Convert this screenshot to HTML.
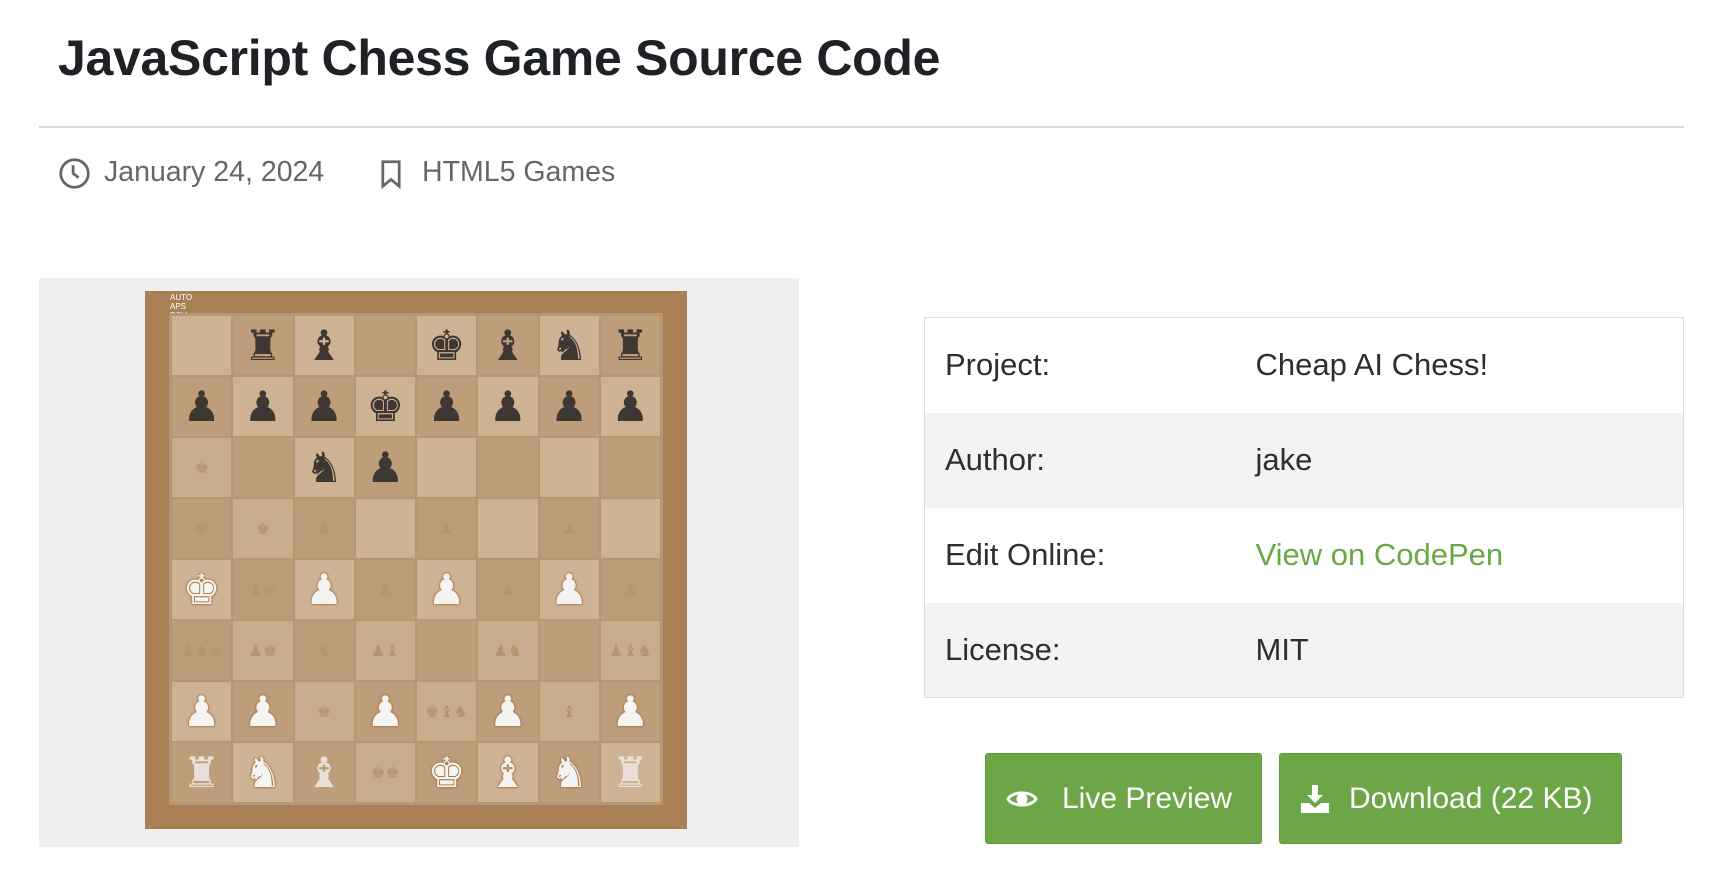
<!DOCTYPE html>
<html><head><meta charset="utf-8"><style>
*{margin:0;padding:0;box-sizing:border-box}
body{width:1722px;height:884px;background:#fff;font-family:"Liberation Sans",sans-serif;position:relative;overflow:hidden;color:#212529}
h1{position:absolute;left:58px;top:29px;font-size:50px;font-weight:bold;letter-spacing:-0.3px;color:#1e2125}
.hr{position:absolute;left:39px;top:126px;width:1645px;height:2px;background:#dcdcdc}
.meta{position:absolute;top:155px;font-size:28.5px;color:#63676c;line-height:34px}
.gray{position:absolute;left:39px;top:278px;width:760px;height:569px;background:#efefef}
.board{position:absolute;left:145px;top:291px;width:542px;height:538px;background:#a98054}
.inner{position:absolute;left:24px;top:22px;width:494px;height:492px;background:#b89672;padding:3px;display:grid;grid-template-columns:repeat(8,1fr);grid-template-rows:repeat(8,1fr);gap:2px}
.c{display:flex;align-items:center;justify-content:center;font-family:"DejaVu Sans",sans-serif;font-size:42px;line-height:1}
.l{background:#cdb294}.d{background:#bd9d7a}
.b{color:#3f3832}
.w{color:#f6f4f2;text-shadow:0 0 2px #a87a4c,0 0 2px #a87a4c,0 0 2px #a87a4c}
.f{color:#b8946d;font-size:16px;opacity:.8}
.fw{color:#e8e0d8}
.small{position:absolute;left:25px;top:2px;font-size:8px;color:#fff;line-height:9px}
table{position:absolute;left:924px;top:317px;width:760px;border-collapse:collapse;border:1.5px solid #dedede;font-size:31px;color:#2b2f33}
td{height:95px;padding-left:20px}
tr:nth-child(even) td{background:#f3f3f3}
td.v{padding-left:0}
.btn{position:absolute;top:753px;height:91px;background:#6ca646;border:1px solid #5f9a3c;border-radius:3px;color:#fff;font-size:30px;display:flex;align-items:center}
</style></head><body>
<h1>JavaScript Chess Game Source Code</h1>
<div class="hr"></div>
<svg style="position:absolute;left:58px;top:157px" width="33" height="33" viewBox="0 0 24 24" fill="none" stroke="#63676c" stroke-width="2"><circle cx="12" cy="12" r="10"/><path d="M11 6v6l4 3"/></svg>
<div class="meta" style="left:104px">January 24, 2024</div>
<svg style="position:absolute;left:380px;top:159px" width="22" height="30" viewBox="0 0 16 22" fill="none" stroke="#63676c" stroke-width="2"><path d="M2 2h12v18l-6-5-6 5z"/></svg>
<div class="meta" style="left:422px">HTML5 Games</div>
<div class="gray"></div>
<div class="board">
<div class="small">AUTO<br>APS<br>POV</div>
<div class="inner">
<div class="c l"></div><div class="c d b">♜</div><div class="c l b">♝</div><div class="c d"></div><div class="c l b">♚</div><div class="c d b">♝</div><div class="c l b">♞</div><div class="c d b">♜</div>
<div class="c d b">♟</div><div class="c l b">♟</div><div class="c d b">♟</div><div class="c l b">♚</div><div class="c d b">♟</div><div class="c l b">♟</div><div class="c d b">♟</div><div class="c l b">♟</div>
<div class="c l f">♚</div><div class="c d"></div><div class="c l b">♞</div><div class="c d b">♟</div><div class="c l"></div><div class="c d"></div><div class="c l"></div><div class="c d"></div>
<div class="c d f">♚</div><div class="c l f">♚</div><div class="c d f">♟</div><div class="c l"></div><div class="c d f">♟</div><div class="c l"></div><div class="c d f">♟</div><div class="c l"></div>
<div class="c l w">♚</div><div class="c d f">♟♚</div><div class="c l w">♟</div><div class="c d f">♟</div><div class="c l w">♟</div><div class="c d f">♟</div><div class="c l w">♟</div><div class="c d f">♟</div>
<div class="c d f">♟♞♚</div><div class="c l f">♟♚</div><div class="c d f">♞</div><div class="c l f">♟♝</div><div class="c d"></div><div class="c l f">♟♞</div><div class="c d"></div><div class="c l f">♟♝♞</div>
<div class="c l w">♟</div><div class="c d w">♟</div><div class="c l f">♚</div><div class="c d w">♟</div><div class="c l f">♚♝♞</div><div class="c d w">♟</div><div class="c l f">♝</div><div class="c d w">♟</div>
<div class="c d fw">♜</div><div class="c l w">♞</div><div class="c d fw">♝</div><div class="c l f">♚♚</div><div class="c d w">♚</div><div class="c l w">♝</div><div class="c d w">♞</div><div class="c l fw">♜</div>
</div></div>
<table>
<tr><td style="width:331px">Project:</td><td class="v">Cheap AI Chess!</td></tr>
<tr><td>Author:</td><td class="v">jake</td></tr>
<tr><td>Edit Online:</td><td class="v" style="color:#6aa843">View on CodePen</td></tr>
<tr><td>License:</td><td class="v">MIT</td></tr>
</table>
<div class="btn" style="left:985px;width:277px"><svg style="margin-left:20px;margin-right:24px" width="32" height="24" viewBox="0 0 32 24"><path d="M2 12C6 4 26 4 30 12C26 20 6 20 2 12Z" fill="none" stroke="#fff" stroke-width="3"/><circle cx="16" cy="12" r="5.5" fill="#fff"/></svg>Live Preview</div>
<div class="btn" style="left:1279px;width:343px"><svg style="margin-left:21px;margin-right:20px" width="28" height="28" viewBox="0 0 28 28" fill="#fff"><path d="M11 0h6v10h5l-8 8-8-8h5z"/><path d="M0 18h8l6 5 6-5h8v10H0z"/></svg>Download (22 KB)</div>
</body></html>
